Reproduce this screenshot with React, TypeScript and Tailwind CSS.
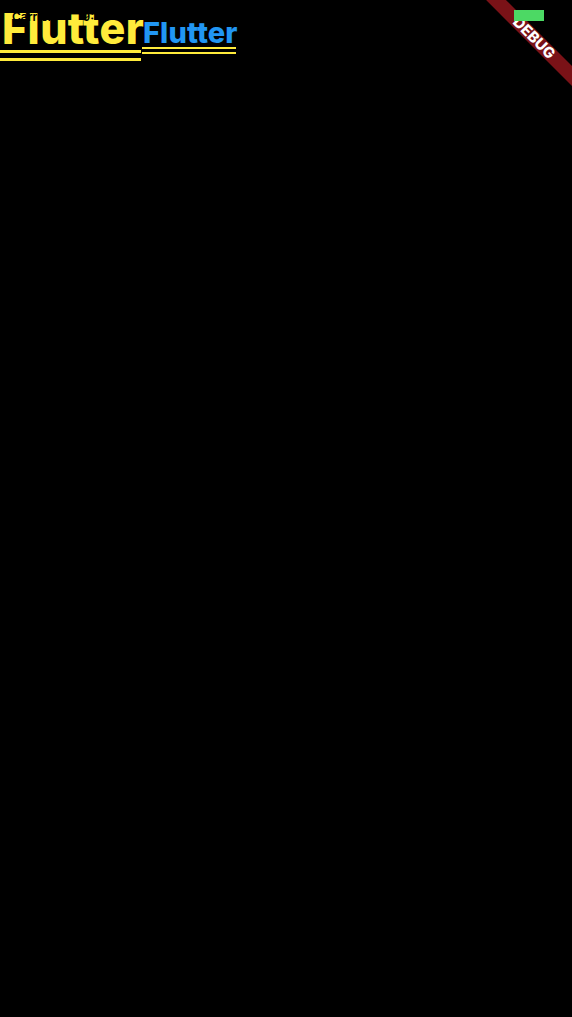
export default function App() {
    return (
        <div className="relative h-[1017px] w-[572px] overflow-hidden bg-black font-['Inter',sans-serif]">
            {/* text row */}
            <div className="flex items-start">
                <div className="flex w-[141px] flex-col">
                    <span className="mt-[2px] ml-[2px] text-[43px] leading-[52px] font-extrabold tracking-[0.4px] whitespace-nowrap text-[#ffeb3b]">Flutter</span>
                    <div className="mt-[-4px] h-[11px] border-y-[3px] border-[#ffeb3b]" />
                </div>
                <div className="ml-[1px] flex w-[94px] flex-col">
                    <span className="mt-[15px] ml-[1px] text-[29px] leading-[35px] font-extrabold tracking-[0.1px] whitespace-nowrap text-[#2196f3]">Flutter</span>
                    <div className="mt-[-3px] h-[7px] border-y-[2px] border-[#ffeb3b]" />
                </div>
            </div>

            {/* status bar, black so it only shows over the yellow */}
            <div className="absolute left-[12px] top-[10px] flex gap-[30px] text-[12px] leading-[14px] font-semibold text-black">
                <span>Carrier</span>
                <span>9:41</span>
            </div>

            {/* debug banner */}
            <div className="absolute right-[-47px] top-[31px] flex h-[14px] w-[170px] rotate-45 items-center justify-center bg-[#7a1217] text-[15px] font-extrabold text-white">
                DEBUG
            </div>
            <div className="absolute left-[514px] top-[10px] h-[11px] w-[30px] bg-[#4cd964]" />
        </div>
    );
}
